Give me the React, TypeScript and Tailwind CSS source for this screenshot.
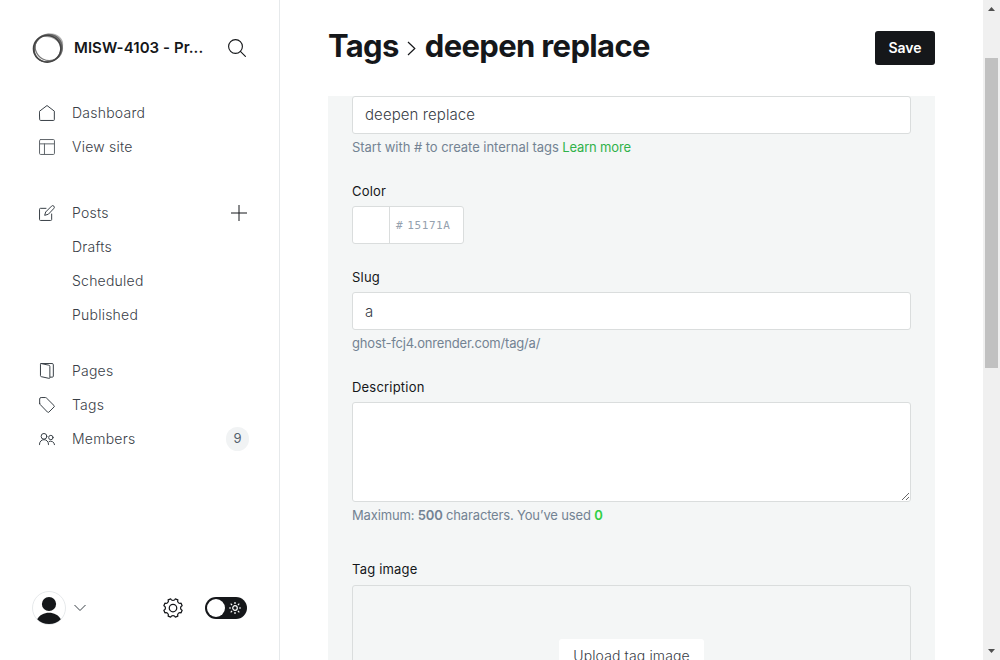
import type { ReactNode } from 'react';

function Icon({ children, className = 'size-4' }: { children: ReactNode; className?: string }) {
  return (
    <svg viewBox="0 0 24 24" fill="none" stroke="currentColor" strokeWidth="1.5" strokeLinecap="round" strokeLinejoin="round" className={className}>
      {children}
    </svg>
  );
}

function NavItem({ icon, label, children }: { icon?: ReactNode; label: string; children?: ReactNode }) {
  return (
    <li className="flex h-[34px] items-center pr-[31px] pl-[39px] text-[#394047]">
      <span className="mr-[17px] flex size-4 shrink-0 items-center">{icon}</span>
      <span className="flex-1 pb-[2px] text-[14px] font-[360] tracking-[0.23px]">{label}</span>
      {children}
    </li>
  );
}

function Logo() {
  return (
    <svg viewBox="0 0 32 32" fill="none" className="size-8 shrink-0">
      <path fill="#b0b0b0" d="M13 2C21-.2 29 3.500 31 10c1 8-3 16-9.500 19 4-4 7-8 6.500-14C27 9 21 4.500 12 5Z" />
      <ellipse cx="16.800" cy="15.500" rx="13.800" ry="13" stroke="#777" strokeWidth="1.200" transform="rotate(28 16.800 15.500)" />
      <ellipse cx="16" cy="16.200" rx="14.300" ry="13" stroke="#666" strokeWidth="1.300" transform="rotate(-45 16 16.200)" />
      <ellipse cx="15.200" cy="16.800" rx="13.700" ry="13.300" stroke="#444" strokeWidth="1.600" />
    </svg>
  );
}

function Sidebar() {
  return (
    <aside className="flex h-full w-[280px] shrink-0 flex-col border-r border-[#e6e9eb] bg-white">
      <header className="flex h-24 items-center pr-[33px] pl-8">
        <Logo />
        <span className="ml-[10px] flex-1 text-[15px] font-semibold tracking-[0.06px] whitespace-nowrap text-[#15171a]">MISW-4103 - Pr...</span>
        <Icon className="size-[18px] text-[#15171a]">
          <circle cx="10" cy="10" r="9.200" />
          <path d="M16.500 16.500 23.200 23.200" />
        </Icon>
      </header>
      <ul>
        <NavItem label="Dashboard" icon={<Icon><path d="M1 9.200 12 .8l11 8.400V22a1.200 1.200 0 0 1-1.200 1.200H2.200A1.200 1.200 0 0 1 1 22Z" /></Icon>} />
        <NavItem label="View site" icon={<Icon className="size-4 opacity-80"><rect x=".8" y=".8" width="22.400" height="22.400" rx="1.600" /><path d="M.8 7.300h22.400M8.200 7.300v15.900" /></Icon>} />
      </ul>
      <ul className="mt-8">
        <NavItem label="Posts" icon={<Icon><path d="M10.500 5H2.200A1.400 1.400 0 0 0 .8 6.400v15.400a1.400 1.400 0 0 0 1.400 1.400h15.400a1.400 1.400 0 0 0 1.400-1.400V13.500M13.500 14l-5 1.500L10 10.500l8.800-8.800a2.400 2.400 0 0 1 3.500 3.500Z" /></Icon>}>
          <Icon className="mr-px size-4 text-[#15171a]"><path d="M12 0v24M0 12h24" /></Icon>
        </NavItem>
        <NavItem label="Drafts" />
        <NavItem label="Scheduled" />
        <NavItem label="Published" />
      </ul>
      <ul className="mt-[22px]">
        <NavItem label="Pages" icon={<Icon><path d="M3.200.8h16.500A1.800 1.800 0 0 1 21.500 2.600v17.100a1.500 1.500 0 0 1-1.500 1.500h-3M3.200.8l11.500 2.500a2 2 0 0 1 1.600 2v16.500a1.200 1.200 0 0 1-1.500 1.200L3.400 20.500a1.600 1.600 0 0 1-1.200-1.600V2A1.100 1.100 0 0 1 3.200.8Z" /></Icon>} />
        <NavItem label="Tags" icon={<Icon><path d="M1 9.500V3A2.200 2.200 0 0 1 3.200.8h6.400c.6 0 1.200.2 1.600.7l11.400 11.400a1.400 1.400 0 0 1 0 2l-7.800 7.800a1.400 1.400 0 0 1-2 0L1.600 11.100c-.4-.4-.6-1-.6-1.600Z" /></Icon>} />
        <NavItem label="Members" icon={<Icon><circle cx="7.500" cy="8" r="4.300" /><path d="M.8 20.500v-.8a6.700 6.700 0 0 1 13.400 0v.8" /><circle cx="17.800" cy="9.800" r="3.300" /><path d="M15.300 15.600a5.600 5.600 0 0 1 8 4.900" /></Icon>}>
          <span className="mr-[-1px] flex h-6 w-[23px] items-center justify-center rounded-full bg-[#f1f3f4] text-[13px] text-[#54616d]">9</span>
        </NavItem>
      </ul>
      <footer className="mt-auto flex h-[104px] items-center pr-8 pl-8">
        <svg viewBox="0 0 34 34" className="size-[34px]">
          <circle cx="17" cy="17" r="16.500" fill="white" stroke="#e6e9eb" />
          <circle cx="17" cy="13" r="7.100" fill="#15171a" />
          <path d="M5.200 28.200C7.500 24 12 21.800 17 21.800s9.500 2.200 11.800 6.400C26 31.300 22 33 17 33S8 31.300 5.200 28.200Z" fill="#15171a" />
        </svg>
        <svg viewBox="0 0 12 8" fill="none" stroke="#394047" className="ml-2 h-2 w-3">
          <path d="M.5 1 6 6.500 11.500 1" />
        </svg>
        <Icon className="ml-[77px] size-5 text-[#15171a]">
          <circle cx="12" cy="12" r="4.500" />
          <path d="M14.730 1.040 17.820 2.310A2.900 2.900 0 0 0 21.690 6.180L22.960 9.270A2.900 2.900 0 0 0 22.960 14.730L21.690 17.820A2.900 2.900 0 0 0 17.820 21.690L14.730 22.960A2.900 2.900 0 0 0 9.270 22.960L6.180 21.690A2.900 2.900 0 0 0 2.310 17.820L1.040 14.730A2.900 2.900 0 0 0 1.040 9.270L2.310 6.180A2.900 2.900 0 0 0 6.180 2.310L9.270 1.040A2.900 2.900 0 0 0 14.730 1.040Z" />
        </Icon>
        <span className="ml-[22px] flex h-[22px] w-[42px] items-center justify-between rounded-full bg-[#15171a] pr-[6px] pl-[2px]">
          <span className="size-[18px] rounded-full bg-white" />
          <svg viewBox="0 0 12 12" fill="none" stroke="white" strokeWidth="1.200" className="size-3">
            <circle cx="6" cy="6" r="2.300" />
            <path d="M6 0v2M6 10v2M0 6h2M10 6h2M1.700 1.700l1.400 1.400M8.900 8.900l1.400 1.400M1.700 10.300l1.400-1.400M8.900 3.100l1.400-1.400" />
          </svg>
        </span>
      </footer>
    </aside>
  );
}

const label = 'block h-[18px] text-[13px] leading-[18px] tracking-[0.2px] text-[#15171a]';
const field = 'block w-full rounded-[3px] border border-[#dadddd] bg-white';
const input = `${field} h-[38px] px-3 text-[15px] font-[350] tracking-[0.09px] text-[#394047] outline-none`;
const hint = 'mt-1 h-[18px] text-[13px] leading-[18px] font-[370] text-[#738393]';

function TagForm() {
  return (
    <form className="h-[564px] overflow-hidden bg-[#f4f6f6] px-6">
      <input className={`pb-[2px] ${input}`} defaultValue="deepen replace" />
      <p className={`tracking-[-0.04px] ${hint}`}>Start with # to create internal tags <a className="tracking-[-0.18px] text-[#30b24a]">Learn more</a></p>

      <label className={`mt-[26px] ${label}`}>Color</label>
      <div className="mt-[6px] flex h-[38px] w-[112px] rounded-[3px] border border-[#dadddd] bg-white">
        <span className="w-[37px] border-r border-[#dadddd]" />
        <span className="flex items-center pt-[3px] pl-[6px] font-['DejaVu_Sans_Mono',monospace] text-[11px] tracking-[0.600px] text-[#95a1ae]">
          <span className="mr-1">#</span>15171A
        </span>
      </div>

      <label className={`mt-6 ${label}`}>Slug</label>
      <input className={`mt-[6px] ${input}`} defaultValue="a" />
      <p className={`tracking-[-0.17px] ${hint}`}>ghost-fcj4.onrender.com/tag/a/</p>

      <label className={`mt-[26px] ${label}`}>Description</label>
      <textarea className={`mt-[6px] h-[100px] resize ${field}`} />
      <p className={`tracking-[-0.16px] ${hint}`}>Maximum: <b className="font-semibold">500</b> characters. You’ve used <b className="font-semibold text-[#30cf43]">0</b></p>

      <label className={`mt-9 ${label}`}>Tag image</label>
      <div className="mt-[7px] flex h-[140px] items-start justify-center rounded-[3px] border border-[#dadddd] pt-[53px]">
        <button type="button" className="h-[34px] w-[145px] rounded-[3px] bg-white pb-[2px] text-[14px] font-[360] tracking-[0.120px] text-[#394047]">Upload tag image</button>
      </div>
    </form>
  );
}

function ScrollTrack() {
  return (
    <div className="flex h-full w-[17px] shrink-0 flex-col items-center bg-[#f0f0f0]">
      <svg viewBox="0 0 17 17" className="size-[17px]"><path d="M5 11h7L8.500 7Z" fill="#505050" /></svg>
      <div className="mt-[41px] h-[310px] w-[13px] bg-[#c1c1c1]" />
      <svg viewBox="0 0 17 17" className="mt-auto size-[17px]"><path d="M5 6h7l-3.500 4Z" fill="#505050" /></svg>
    </div>
  );
}

export default function App() {
  return (
    <div className="flex h-[660px] w-[1000px] overflow-hidden bg-white font-['Inter',sans-serif]">
      <Sidebar />
      <main className="min-w-0 flex-1 px-12">
        <header className="flex h-24 items-center justify-between">
          <h1 className="flex items-center pb-1 text-[31px] font-bold tracking-[-0.650px] whitespace-nowrap text-[#15171a]">
            Tags
            <svg viewBox="0 0 9 15" fill="none" stroke="#15171a" strokeWidth="1.200" className="mt-[5px] mr-[9px] ml-2 h-[15px] w-[9px]"><path d="m1 1 6.800 6.500L1 14" /></svg>
            deepen replace
          </h1>
          <button className="h-[34px] w-[60px] rounded-[3px] bg-[#15171a] pb-[2px] text-[14px] font-semibold text-white">Save</button>
        </header>
        <TagForm />
      </main>
      <ScrollTrack />
    </div>
  );
}
